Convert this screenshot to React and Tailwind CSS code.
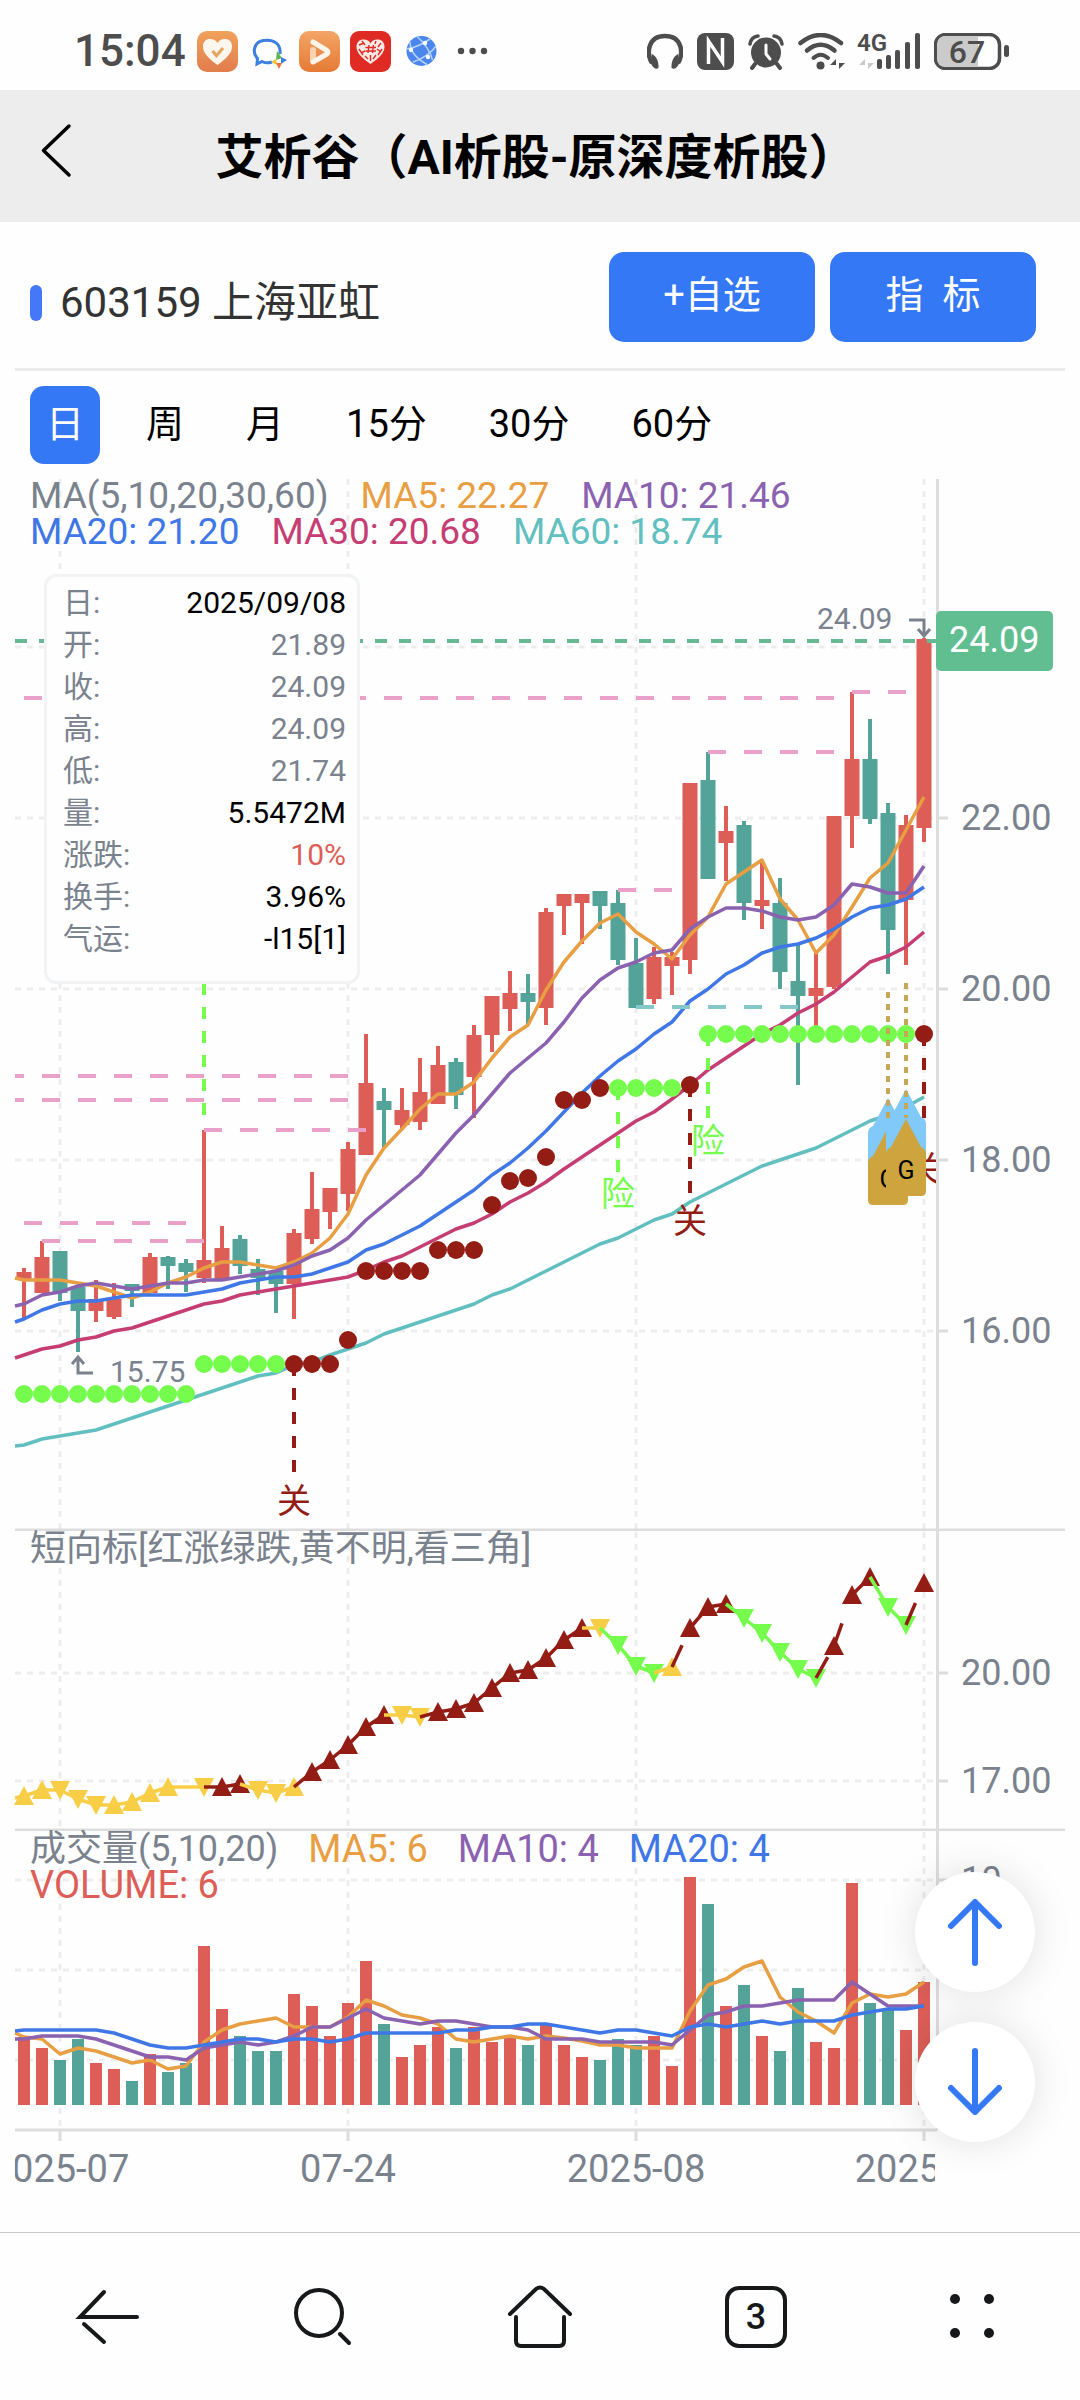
import React from 'react';

const RED = '#dc5e57';
const GREEN = '#54a399';
const LIME = '#75fc4c';
const DARK = '#931d14';
const YELLOW = '#f7ce46';
const GRAY = '#7a828e';

const FIRST_X = 24;
const STEP = 18;
const LEFT = 15;
const RIGHT = 937;
const TIME_X = [60, 348, 636, 924];

const xOf = (i) => FIRST_X + i * STEP;

// [color, high, body top, body bottom, low]
const CANDLES = [
  ['r', 1268, 1272, 1279, 1319], ['r', 1241, 1257, 1293, 1293], ['g', 1251, 1251, 1293, 1301],
  ['g', 1287, 1287, 1311, 1352], ['r', 1280, 1299, 1311, 1322], ['r', 1283, 1299, 1317, 1319],
  ['g', 1284, 1284, 1291, 1307], ['r', 1253, 1257, 1293, 1293], ['g', 1256, 1257, 1266, 1289],
  ['g', 1259, 1263, 1272, 1292], ['r', 1130, 1260, 1278, 1283], ['r', 1226, 1248, 1279, 1279],
  ['g', 1235, 1239, 1266, 1274], ['g', 1259, 1269, 1278, 1295], ['g', 1271, 1271, 1284, 1313],
  ['r', 1229, 1233, 1284, 1319], ['r', 1172, 1209, 1239, 1244], ['r', 1188, 1188, 1212, 1229],
  ['r', 1142, 1149, 1194, 1211], ['r', 1034, 1083, 1155, 1155], ['g', 1088, 1101, 1110, 1148],
  ['r', 1088, 1110, 1125, 1130], ['r', 1058, 1092, 1122, 1130], ['r', 1046, 1065, 1104, 1104],
  ['g', 1058, 1062, 1095, 1109], ['r', 1025, 1035, 1077, 1118], ['r', 996, 996, 1035, 1052],
  ['r', 971, 993, 1009, 1031], ['g', 974, 993, 1002, 1025], ['r', 908, 912, 1008, 1025],
  ['r', 894, 894, 906, 935], ['r', 894, 894, 903, 944], ['g', 891, 891, 906, 929],
  ['g', 890, 903, 960, 965], ['g', 938, 963, 1008, 1008], ['r', 947, 957, 999, 1004],
  ['r', 952, 957, 966, 995], ['r', 783, 783, 960, 974], ['g', 752, 780, 879, 879],
  ['r', 806, 831, 843, 881], ['g', 821, 825, 903, 920], ['r', 860, 900, 906, 929],
  ['g', 878, 903, 972, 989], ['g', 944, 981, 996, 1085], ['r', 953, 988, 996, 1026],
  ['r', 816, 816, 987, 989], ['r', 692, 759, 816, 848], ['g', 719, 759, 819, 824],
  ['g', 803, 813, 930, 974], ['r', 815, 825, 900, 965], ['r', 638, 639, 828, 842],
];

// first value sits on the left edge of the pane, the rest on the candles
const MA_LINES = [
  { color: '#e89e42', ys: [1278, 1280, 1280, 1280, 1283, 1286, 1292, 1298, 1292, 1283, 1277, 1268, 1262, 1262, 1265, 1268, 1262, 1253, 1238, 1214, 1175, 1148, 1129, 1109, 1094, 1094, 1082, 1058, 1037, 1025, 990, 962, 941, 923, 914, 932, 944, 959, 935, 917, 884, 872, 860, 899, 920, 953, 935, 907, 878, 863, 830, 797] },
  { color: '#8a62b0', ys: [1306, 1304, 1295, 1292, 1286, 1283, 1286, 1289, 1286, 1283, 1283, 1280, 1280, 1277, 1274, 1271, 1265, 1256, 1250, 1238, 1220, 1205, 1190, 1175, 1154, 1133, 1115, 1094, 1073, 1058, 1043, 1022, 998, 980, 968, 962, 953, 950, 929, 917, 908, 908, 911, 917, 920, 917, 905, 884, 887, 893, 893, 866] },
  { color: '#3f78e6', ys: [1322, 1319, 1310, 1304, 1301, 1301, 1298, 1295, 1295, 1295, 1295, 1292, 1289, 1283, 1280, 1277, 1277, 1274, 1268, 1262, 1250, 1244, 1235, 1226, 1214, 1202, 1190, 1175, 1163, 1148, 1131, 1112, 1093, 1076, 1061, 1049, 1034, 1022, 1001, 989, 974, 965, 953, 947, 944, 938, 929, 917, 908, 905, 899, 887] },
  { color: '#c53d72', ys: [1358, 1355, 1349, 1346, 1340, 1337, 1331, 1328, 1322, 1316, 1310, 1304, 1301, 1295, 1292, 1289, 1286, 1283, 1280, 1277, 1270, 1262, 1256, 1247, 1238, 1229, 1223, 1214, 1202, 1193, 1182, 1169, 1157, 1145, 1133, 1121, 1112, 1099, 1085, 1070, 1058, 1046, 1034, 1025, 1013, 1004, 992, 977, 962, 956, 947, 932] },
  { color: '#62bfbf', ys: [1446, 1445, 1439, 1436, 1433, 1430, 1424, 1418, 1412, 1406, 1400, 1394, 1388, 1382, 1376, 1373, 1365, 1362, 1355, 1349, 1343, 1334, 1328, 1322, 1316, 1310, 1304, 1295, 1289, 1280, 1271, 1262, 1253, 1244, 1238, 1229, 1220, 1214, 1202, 1193, 1184, 1175, 1166, 1160, 1154, 1148, 1139, 1130, 1121, 1115, 1107, 1097] },
];

// [from, to, y, color]
const DOT_RUNS = [
  [0, 9, 1394, LIME], [10, 14, 1364, LIME], [15, 17, 1364, DARK], [18, 18, 1340, DARK],
  [19, 22, 1271, DARK], [23, 25, 1250, DARK], [26, 26, 1205, DARK], [27, 27, 1181, DARK],
  [28, 28, 1178, DARK], [29, 29, 1157, DARK], [30, 31, 1100, DARK], [32, 32, 1088, DARK],
  [33, 36, 1088, LIME], [37, 37, 1085, DARK], [38, 49, 1034, LIME], [50, 50, 1034, DARK],
];

// [x1, x2, y]
const LEVELS = [
  [24, 834, 698], [852, 906, 692], [708, 834, 752], [618, 672, 890], [6, 348, 1076],
  [6, 348, 1100], [204, 366, 1130], [24, 186, 1223], [42, 204, 1241],
];

// [x, y1, y2, color, label, label baseline]
const SIGNALS = [
  [204, 983, 1115, LIME, '', 0],
  [294, 1364, 1472, DARK, '关', 1513],
  [618, 1088, 1172, LIME, '险', 1206],
  [690, 1085, 1193, DARK, '关', 1233],
  [708, 1034, 1118, LIME, '险', 1153],
  [924, 1034, 1118, DARK, '关', 1181],
];

// [marker, y]: u / d is the direction, - draws the line only
const TREND = [
  ['uy', 1796], ['uy', 1790], ['dy', 1790], ['dy', 1799], ['dy', 1805], ['uy', 1805], ['uy', 1802],
  ['uy', 1793], ['uy', 1787], ['-y', 1787], ['dy', 1787], ['ur', 1787], ['ur', 1784], ['dy', 1790],
  ['dy', 1793], ['uy', 1787], ['ur', 1772], ['ur', 1760], ['ur', 1745], ['ur', 1727], ['ur', 1715],
  ['dy', 1715], ['dy', 1717], ['ur', 1712], ['ur', 1709], ['ur', 1703], ['ur', 1688], ['ur', 1673],
  ['ur', 1670], ['ur', 1658], ['ur', 1640], ['ur', 1628], ['dy', 1628], ['dg', 1645], ['dg', 1666],
  ['dg', 1673], ['uy', 1667], ['ur', 1628], ['ur', 1607], ['ur', 1604], ['dg', 1618], ['dg', 1633],
  ['dg', 1652], ['dg', 1669], ['dg', 1678], ['ur', 1646], ['ur', 1595], ['ur', 1577], ['dg', 1607],
  ['dg', 1625], ['ur', 1583],
];
const TREND_COLORS = { y: YELLOW, r: DARK, g: LIME };

const VOLUME_TOPS = [
  2037, 2048, 2060, 2039, 2063, 2069, 2081, 2054, 2072, 2063, 1946, 2009, 2036, 2051, 2051, 1994, 2006,
  2036, 2003, 1961, 2024, 2057, 2045, 2027, 2048, 2027, 2042, 2037, 2045, 2025, 2045, 2057, 2060, 2039,
  2045, 2036, 2066, 1877, 1904, 2006, 1985, 2036, 2051, 1988, 2042, 2048, 1883, 2003, 2009, 2030, 1982,
];
const VOLUME_BASE = 2105;

const VOLUME_LINES = [
  { color: '#e89e42', ys: [2033, 2037, 2039, 2054, 2048, 2051, 2057, 2063, 2060, 2069, 2066, 2042, 2030, 2024, 2021, 2018, 2027, 2027, 2027, 2017, 2000, 2006, 2015, 2018, 2024, 2039, 2042, 2039, 2036, 2039, 2036, 2038, 2041, 2045, 2045, 2048, 2048, 2048, 2011, 1985, 1979, 1967, 1961, 1997, 2012, 2021, 2033, 2003, 1994, 1997, 1994, 1982] },
  { color: '#8a62b0', ys: [2039, 2039, 2036, 2036, 2036, 2039, 2045, 2051, 2057, 2057, 2060, 2048, 2045, 2042, 2045, 2042, 2036, 2027, 2027, 2018, 2009, 2018, 2021, 2024, 2021, 2021, 2024, 2027, 2027, 2030, 2039, 2039, 2039, 2042, 2042, 2042, 2042, 2045, 2030, 2015, 2012, 2006, 2006, 2003, 2000, 2000, 2000, 1982, 1994, 2006, 2006, 2006] },
  { color: '#3f78e6', ys: [2031, 2030, 2030, 2030, 2030, 2030, 2033, 2039, 2045, 2048, 2048, 2045, 2042, 2039, 2039, 2042, 2039, 2039, 2042, 2039, 2033, 2033, 2033, 2033, 2033, 2030, 2030, 2027, 2027, 2024, 2024, 2027, 2030, 2033, 2030, 2030, 2033, 2036, 2027, 2024, 2027, 2024, 2021, 2024, 2021, 2021, 2021, 2015, 2012, 2009, 2009, 2006] },
];

const PERIODS = ['日', '周', '月', '15分', '30分', '60分'];

const QUOTE = [
  ['日:', '2025/09/08', 'text-black'],
  ['开:', '21.89', 'text-[#7a828e]'],
  ['收:', '24.09', 'text-[#7a828e]'],
  ['高:', '24.09', 'text-[#7a828e]'],
  ['低:', '21.74', 'text-[#7a828e]'],
  ['量:', '5.5472M', 'text-black'],
  ['涨跌:', '10%', 'text-[#dc5e57]'],
  ['换手:', '3.96%', 'text-black'],
  ['气运:', '-l15[1]', 'text-black'],
];

function StatusBar() {
  return (
    <div className="flex h-[90px] items-center justify-between pt-[12px] pr-[71px] pl-[74px] text-[#4d4d4d]">
      <div className="flex items-center gap-[10px]">
        <span className="mr-[1px] text-[44px] leading-[44px] font-medium">15:04</span>
        <svg className="h-[41px] w-[41px]" viewBox="0 0 41 41">
          <defs>
            <linearGradient id="app-a" x1="0" y1="0" x2="0" y2="1">
              <stop offset="0" stopColor="#f0a25c" />
              <stop offset="1" stopColor="#e27c4c" />
            </linearGradient>
          </defs>
          <rect width="41" height="41" rx="10" fill="url(#app-a)" />
          <path d="M20.5 34C11 27 6 22 6 15.500C6 10.500 9 8 13 8C16.500 8 19 9.500 20.500 12C22 9.500 24.500 8 28 8C32 8 35 10.500 35 15.500C35 22 30 27 20.500 34Z" fill="#fdf6ec" />
          <path d="M15.500 20L19.500 24.500L26 17" fill="none" stroke="#e5a565" strokeWidth="3.2" />
        </svg>
        <svg className="h-[41px] w-[41px]" viewBox="0 0 41 41">
          <path d="M24 31C20 32.500 16 31.500 14 30.500L9 33L9.500 27.500C4 22 5.500 11 15.500 9.500C26 8 33 13 32 23" fill="none" stroke="#3b7fe0" strokeWidth="3" />
          <path d="M29 20L34 27L28 29Z" fill="#58b94a" />
          <path d="M33 26L39 29L33 33Z" fill="#3b7fe0" />
          <path d="M28 28L29 34L23 31Z" fill="#f2c233" />
          <path d="M28 32L34 32L31 38Z" fill="#e8743b" />
        </svg>
        <svg className="h-[41px] w-[41px]" viewBox="0 0 41 41">
          <defs>
            <linearGradient id="app-b" x1="0" y1="0" x2="0" y2="1">
              <stop offset="0" stopColor="#f3a567" />
              <stop offset="1" stopColor="#e57a35" />
            </linearGradient>
          </defs>
          <rect width="41" height="41" rx="10" fill="url(#app-b)" />
          <path d="M14 19V30" fill="none" stroke="#f9d3b0" strokeWidth="6" strokeLinecap="round" />
          <path d="M14 11L28 19.500Q30 21 28 23L14 31" fill="none" stroke="#fdf4ea" strokeWidth="5" strokeLinecap="round" strokeLinejoin="round" />
        </svg>
        <svg className="h-[41px] w-[41px]" viewBox="0 0 41 41">
          <rect width="41" height="41" rx="9" fill="#df2b24" />
          <path d="M20.500 33C12 27 6.500 22 6.500 16C6.500 11 9.500 8.500 13.500 8.500C17 8.500 19.500 10 20.500 12.500C21.500 10 24 8.500 27.500 8.500C31.500 8.500 34.500 11 34.500 16C34.500 22 29 27 20.500 33Z" fill="#fbe9e6" />
          <path d="M19 14L18 22M23.500 14L22.500 22M15.500 16.500H26M15.500 20H26M9 14L14 12M9 18L13 24M11 22L15 20M31 12L28 16M32 18L28 24M27 18L31 21M20.500 24V30M15 25L18 28M26 24L23 28M12 10L15 14M26 10L25 13" stroke="#df2b24" strokeWidth="1.4" />
        </svg>
        <svg className="h-[41px] w-[41px]" viewBox="0 0 41 41">
          <circle cx="20.500" cy="20" r="15" fill="#4a86ec" />
          <path d="M16 5.500C24 12 30 22 31.500 29M29 8C22 13 12 17 5.500 18M9 11C9 20 16 28 26 33.500M35 15C31 21 22 28 12 31" fill="none" stroke="#b7d2fa" strokeWidth="1.6" />
          <circle cx="24" cy="12" r="2.200" fill="#fff" />
          <circle cx="10" cy="19" r="2.200" fill="#fff" />
          <circle cx="27" cy="26" r="2.200" fill="#fff" />
        </svg>
        <svg className="h-[41px] w-[41px]" viewBox="0 0 41 41" fill="currentColor">
          <circle cx="9" cy="20" r="3.2" />
          <circle cx="20.500" cy="20" r="3.2" />
          <circle cx="32" cy="20" r="3.2" />
        </svg>
      </div>
      <div className="flex items-center gap-[14px]">
        <svg className="h-[37px] w-[36px]" viewBox="0 0 36 37" fill="none" stroke="currentColor">
          <path d="M5 30C-1 20 1 3 18 3C35 3 37 20 31 30" strokeWidth="4.5" />
          <path d="M5 21C9 23 12 28 11.500 35C8 37 5 34 3.500 29Z" fill="currentColor" stroke="none" />
          <path d="M31 21C27 23 24 28 24.500 35C28 37 31 34 32.500 29Z" fill="currentColor" stroke="none" />
        </svg>
        <svg className="h-[37px] w-[37px]" viewBox="0 0 37 37">
          <rect width="37" height="37" rx="8" fill="currentColor" />
          <path d="M11.500 31V8L25.500 29V5" fill="none" stroke="#fff" strokeWidth="3.5" />
        </svg>
        <svg className="h-[37px] w-[36px]" viewBox="0 0 36 37" fill="none" stroke="currentColor">
          <circle cx="18" cy="19.500" r="15" fill="currentColor" stroke="none" />
          <path d="M2 11Q3 4 10 3M34 11Q33 4 26 3" strokeWidth="3.5" strokeLinecap="round" />
          <path d="M7 31L4 35M29 31L32 35" strokeWidth="4" strokeLinecap="round" />
          <path d="M18 12V21L22 26" stroke="#fff" strokeWidth="3" strokeLinecap="round" />
        </svg>
        <svg className="h-[37px] w-[47px]" viewBox="0 0 47 37" fill="none" stroke="currentColor" strokeLinecap="round">
          <path d="M2.500 10Q22.500 -6 43 10" strokeWidth="4.5" />
          <path d="M9 17.500Q22.500 6 36.500 17.500" strokeWidth="4.5" />
          <path d="M15.500 25Q22.500 18.500 30 25" strokeWidth="4" />
          <circle cx="22.500" cy="32.500" r="4" fill="currentColor" stroke="none" />
          <path d="M38 36V26L32 32H38ZM41 26V36L47 30H41Z" fill="currentColor" stroke="none" />
        </svg>
        <svg className="h-[37px] w-[61px] overflow-visible" viewBox="0 0 61 37" fill="currentColor">
          <text x="-2" y="18" fontSize="24" fontWeight="600">4G</text>
          <path d="M6 36V26L0 32H6ZM9 26V36L15 30H9Z" fill="#c9c9c9" />
          <rect x="18" y="26" width="5" height="10" rx="2" />
          <rect x="27" y="22" width="5" height="14" rx="2" />
          <rect x="36" y="17" width="5" height="19" rx="2" />
          <rect x="46" y="9" width="5" height="27" rx="2" />
          <rect x="56" y="0" width="5" height="36" rx="2" />
        </svg>
        <svg className="h-[37px] w-[75px]" viewBox="0 0 75 37">
          <rect x="1.500" y="1.500" width="64" height="34" rx="10" fill="#fff" stroke="#4d4d4d" strokeWidth="3.5" />
          <path d="M44 3V34H12Q3 34 3 25V12Q3 3 12 3Z" fill="#cbcbcb" />
          <rect x="70" y="12" width="5" height="12" rx="2.5" fill="#4d4d4d" />
          <text x="33" y="30" textAnchor="middle" fontSize="32" fontWeight="500" fill="#4d4d4d">67</text>
        </svg>
      </div>
    </div>
  );
}

function TitleBar() {
  return (
    <header className="grid h-[132px] grid-cols-[96px_1fr_104px] items-center bg-[#ededed]">
      <button type="button" aria-label="返回" className="flex h-full items-center justify-start pb-[12px] pl-[40px]">
        <svg className="h-[60px] w-[34px]" viewBox="0 0 34 60" fill="none" stroke="#000" strokeWidth="3.5" strokeLinecap="round" strokeLinejoin="round">
          <path d="M29 6L3.500 30.500L29 55" />
        </svg>
      </button>
      <h1 className="pt-[4px] text-center text-[48px] leading-[60px] font-bold whitespace-nowrap text-black">艾析谷（AI析股-原深度析股）</h1>
    </header>
  );
}

function StockRow() {
  return (
    <div className="mx-[15px] flex h-[149px] items-start justify-between border-b-3 border-[#ebebeb] pt-[30px] pr-[29px] pl-[15px]">
      <div className="flex h-[102px] items-center gap-[18px]">
        <span className="h-[36px] w-[12px] rounded-full bg-[#4478f8]"></span>
        <h2 className="text-[42px] leading-[60px] text-[#333]">603159 上海亚虹</h2>
      </div>
      <div className="flex gap-[15px]">
        <button type="button" className="h-[90px] w-[206px] rounded-[15px] bg-[#3578f6] pb-[4px] text-[38px] text-white">+自选</button>
        <button type="button" className="h-[90px] w-[206px] rounded-[15px] bg-[#3578f6] pb-[4px] text-[38px] whitespace-pre text-white">指&nbsp;&nbsp;标</button>
      </div>
    </div>
  );
}

function PeriodTabs() {
  return (
    <div className="flex gap-[30px] px-[30px] pt-[15px]">
      {PERIODS.map((name, i) => (
        <button
          key={name}
          type="button"
          className={`h-[78px] rounded-[14px] px-[16px] pb-[2px] text-[38px] ${i === 0 ? 'bg-[#3578f6] text-white' : 'text-black'}`}
        >
          {name}
        </button>
      ))}
    </div>
  );
}

function Grid({ top, bottom, rows }) {
  return (
    <g stroke="#ededed" strokeWidth="3" strokeDasharray="6 6">
      {rows.map((y) => (
        <line key={y} x1={LEFT} x2={RIGHT} y1={y} y2={y} />
      ))}
      {TIME_X.map((x) => (
        <line key={x} x1={x} x2={x} y1={top} y2={bottom} />
      ))}
    </g>
  );
}

function PriceAxis({ top, bottom, ticks }) {
  return (
    <g>
      <line x1="937.500" x2="937.500" y1={top} y2={bottom} stroke="#dddddd" strokeWidth="3" />
      {ticks.map(([y, label]) => (
        <g key={y}>
          <line x1="939" x2="948" y1={y} y2={y} stroke="#dddddd" strokeWidth="3" />
          <text x="961" y={y + 12} fontSize="36" fill={GRAY}>{label}</text>
        </g>
      ))}
    </g>
  );
}

function Lines({ lines }) {
  return lines.map(({ color, ys }) => (
    <polyline
      key={color}
      points={ys.map((y, i) => `${i === 0 ? LEFT : xOf(i - 1)},${y}`).join(' ')}
      fill="none"
      stroke={color}
      strokeWidth="3.5"
      strokeLinejoin="round"
    />
  ));
}

function Flag({ x, y }) {
  const shape = (top) =>
    `M${x} ${top}L${x + 15} ${top + 28}Q${x + 20} ${top + 30} ${x + 20} ${top + 35}V${top + 72}Q${x + 20} ${top + 77} ${x + 15} ${top + 77}H${x - 15}Q${x - 20} ${top + 77} ${x - 20} ${top + 72}V${top + 35}Q${x - 20} ${top + 30} ${x - 15} ${top + 28}Z`;
  return (
    <g>
      <path d={shape(y)} fill="#80c9f9" />
      <path d={shape(y + 30)} fill="#cea43f" />
      <text x={x} y={y + 90} textAnchor="middle" fontSize="25" fill="#000">G</text>
    </g>
  );
}

function MainPane() {
  return (
    <section className="relative mt-[12px]">
      <svg className="block w-full" viewBox="0 476 1080 1055">
        <Grid top={479} bottom={1530} rows={[647, 818, 989, 1160, 1331]} />
        <PriceAxis
          top={479}
          bottom={1530}
          ticks={[[818, '22.00'], [989, '20.00'], [1160, '18.00'], [1331, '16.00']]}
        />
        {CANDLES.map(([c, high, top, bottom, low], i) => (
          <g key={i} fill={c === 'r' ? RED : GREEN}>
            <rect x={xOf(i) - 2} y={high} width="4" height={low - high} />
            <rect x={xOf(i) - 7.5} y={top} width="15" height={bottom - top} />
          </g>
        ))}
        <Lines lines={MA_LINES} />
        <g strokeWidth="4" strokeDasharray="18 18">
          {LEVELS.map(([x1, x2, y]) => (
            <line
              key={`${x1}-${y}`}
              x1={Math.max(x1, LEFT)}
              x2={x2}
              y1={y}
              y2={y}
              strokeDashoffset={Math.max(x1, LEFT) - x1}
              stroke="#eba0c9"
            />
          ))}
          <line x1="636" x2="798" y1="1007" y2="1007" stroke="#84c8ca" />
        </g>
        {DOT_RUNS.map(([from, to, y, color]) =>
          Array(to - from + 1)
            .fill(null)
            .map((_, k) => <circle key={`${from}-${k}`} cx={xOf(from + k)} cy={y} r="9" fill={color} />)
        )}
        <clipPath id="pane">
          <rect x={LEFT} y="479" width={RIGHT - LEFT - 1} height="1051" />
        </clipPath>
        <g clipPath="url(#pane)">
          {SIGNALS.map(([x, y1, y2, color, label, baseline]) => (
            <g key={x}>
              <line x1={x} x2={x} y1={y1} y2={y2} stroke={color} strokeWidth="4" strokeDasharray="12 12" />
              {label && (
                <text x={x} y={baseline} textAnchor="middle" fontSize="34" fill={color}>{label}</text>
              )}
            </g>
          ))}
        </g>
        <Flag x={888} y={1098} />
        <Flag x={906} y={1089} />
        <g stroke="#c5a75a" strokeWidth="4" strokeDasharray="6 6">
          <line x1="888" x2="888" y1="992" y2="1118" />
          <line x1="906" x2="906" y1="983" y2="1118" />
        </g>
        <line x1={LEFT} x2={RIGHT} y1="641" y2="641" stroke="#67b994" strokeWidth="4" strokeDasharray="12 12" />
        <rect x="936" y="611" width="117" height="60" rx="5" fill="#61be91" />
        <text x="949" y="652" fontSize="36" fill="#fff">24.09</text>
        <g fontSize="30" fill={GRAY}>
          <text x="817" y="629">24.09</text>
          <text x="110" y="1382">15.75</text>
        </g>
        <g fill="none" stroke={GRAY} strokeWidth="3">
          <path d="M909 620H924V635M918 629L924 636L930 629" />
          <path d="M93 1373H78V1358M72 1364L78 1357L84 1364" />
        </g>
        <line x1={LEFT} x2="1065" y1="1530" y2="1530" stroke="#dddddd" strokeWidth="3" />
      </svg>
      <div className="absolute top-[2px] right-[143px] left-[30px] flex flex-wrap gap-x-[32px] text-[37px] leading-[36px]">
        <span className="text-[#7a828e]">MA(5,10,20,30,60)</span>
        <span className="text-[#e89e42]">MA5: 22.27</span>
        <span className="text-[#8a62b0]">MA10: 21.46</span>
        <span className="text-[#3f78e6]">MA20: 21.20</span>
        <span className="text-[#c53d72]">MA30: 20.68</span>
        <span className="text-[#62bfbf]">MA60: 18.74</span>
      </div>
      <dl className="absolute top-[98px] left-[44px] w-[316px] rounded-[12px] border-3 border-[#f2f3f5] bg-[#fefefe] pt-[5px] pr-[11px] pb-[21px] pl-[16px] text-[30px] leading-[42px]">
        {QUOTE.map(([label, value, color]) => (
          <div key={label} className="flex justify-between">
            <dt className="text-[#7a828e]">{label}</dt>
            <dd className={color}>{value}</dd>
          </div>
        ))}
      </dl>
    </section>
  );
}

function TrendPane() {
  return (
    <section className="relative">
      <svg className="block w-full" viewBox="0 1531 1080 300">
        <Grid top={1532} bottom={1830} rows={[1673, 1781]} />
        <PriceAxis top={1531} bottom={1830} ticks={[[1673, '20.00'], [1781, '17.00']]} />
        {TREND.map(([mark, y], i) => {
          const x = xOf(i);
          const color = TREND_COLORS[mark[1]];
          const x1 = i === 0 ? LEFT : xOf(i - 1);
          const y1 = i === 0 ? 1798 : TREND[i - 1][1];
          return (
            <g key={i} fill={color}>
              <line x1={x1} y1={y1} x2={x} y2={y} stroke={color} strokeWidth="3.5" strokeDasharray={mark[1] === 'r' ? '24 24' : undefined} />
              {mark[0] === 'u' && <path d={`M${x} ${y - 10}L${x + 10} ${y + 9}H${x - 10}Z`} />}
              {mark[0] === 'd' && <path d={`M${x} ${y + 10}L${x + 10} ${y - 9}H${x - 10}Z`} />}
            </g>
          );
        })}
        <line x1={LEFT} x2="1065" y1="1830" y2="1830" stroke="#dddddd" strokeWidth="3" />
      </svg>
      <p className="absolute top-0 left-[30px] text-[36px] leading-[36px] text-[#7a828e]">短向标[红涨绿跌,黄不明,看三角]</p>
    </section>
  );
}

function VolumePane() {
  return (
    <section className="relative">
      <svg className="block w-full" viewBox="0 1831 1080 401">
        <Grid top={1832} bottom={2129} rows={[1880, 1970, 2060]} />
        <PriceAxis top={1831} bottom={2130} ticks={[[1880, '10'], [1970, '6'], [2060, '2']]} />
        {VOLUME_TOPS.map((y, i) => (
          <rect key={i} x={xOf(i) - 6} y={y} width="12" height={VOLUME_BASE - y} fill={CANDLES[i][0] === 'r' ? RED : GREEN} />
        ))}
        <Lines lines={VOLUME_LINES} />
        <line x1={LEFT} x2={RIGHT} y1="2130" y2="2130" stroke="#dddddd" strokeWidth="3" />
        <clipPath id="axis">
          <rect x={LEFT} y="2130" width={RIGHT - LEFT - 2} height="80" />
        </clipPath>
        <g clipPath="url(#axis)">
          {['2025-07', '07-24', '2025-08', '2025-09'].map((label, i) => (
            <g key={label}>
              <line x1={TIME_X[i]} x2={TIME_X[i]} y1="2131" y2="2141" stroke="#dddddd" strokeWidth="3" />
              <text x={TIME_X[i]} y="2182" textAnchor="middle" fontSize="38" fill={GRAY}>{label}</text>
            </g>
          ))}
        </g>
      </svg>
      <div className="absolute top-0 right-[143px] left-[30px] flex flex-wrap gap-x-[30px] text-[38px] leading-[36px]">
        <span className="text-[36px] text-[#7a828e]">成交量(5,10,20)</span>
        <span className="text-[#e89e42]">MA5: 6</span>
        <span className="text-[#8a62b0]">MA10: 4</span>
        <span className="text-[#3f78e6]">MA20: 4</span>
        <span className="text-[#dc5e57]">VOLUME: 6</span>
      </div>
      <div className="absolute top-[41px] right-[45px] flex flex-col gap-[30px]">
        <button type="button" aria-label="上一只" className="flex h-[120px] w-[120px] items-center justify-center rounded-full bg-white shadow-[0_0_40px_rgba(0,0,0,0.12)]">
          <svg className="h-[72px] w-[60px]" viewBox="0 0 60 72" fill="none" stroke="#3578f6" strokeWidth="6" strokeLinecap="round" strokeLinejoin="round">
            <path d="M30 67V6M6 30L30 6L54 30" />
          </svg>
        </button>
        <button type="button" aria-label="下一只" className="flex h-[120px] w-[120px] items-center justify-center rounded-full bg-white shadow-[0_0_40px_rgba(0,0,0,0.12)]">
          <svg className="h-[72px] w-[60px]" viewBox="0 0 60 72" fill="none" stroke="#3578f6" strokeWidth="6" strokeLinecap="round" strokeLinejoin="round">
            <path d="M30 5V66M6 42L30 66L54 42" />
          </svg>
        </button>
      </div>
    </section>
  );
}

function BrowserNav() {
  const icon = 'h-[72px] w-[72px]';
  return (
    <nav className="grid h-[168px] grid-cols-5 items-center justify-items-center border-t border-[#c9c9c9] text-[#17181a]">
      <button type="button" aria-label="后退">
        <svg className={icon} viewBox="0 0 72 72" fill="none" stroke="currentColor" strokeWidth="4" strokeLinecap="round">
          <path d="M65 36H8L32 11M12 43L32 61" />
        </svg>
      </button>
      <button type="button" aria-label="搜索">
        <svg className={icon} viewBox="0 0 72 72" fill="none" stroke="currentColor" strokeWidth="4" strokeLinecap="round">
          <circle cx="31" cy="32" r="23" />
          <path d="M52 53L61 62" />
        </svg>
      </button>
      <button type="button" aria-label="主页">
        <svg className={icon} viewBox="0 0 72 72" fill="none" stroke="currentColor" strokeWidth="4" strokeLinecap="round">
          <path d="M6 33L32 8Q36 5 40 8L66 33" />
          <path d="M12 36V60Q12 65 17 65H55Q60 65 60 60V36" />
        </svg>
      </button>
      <button type="button" className="flex h-[62px] w-[62px] items-center justify-center rounded-[14px] border-4 border-current text-[36px] leading-[36px] font-medium">3</button>
      <button type="button" aria-label="菜单">
        <svg className={icon} viewBox="0 0 72 72" fill="currentColor">
          <circle cx="19" cy="18" r="5" />
          <circle cx="53" cy="18" r="5" />
          <circle cx="19" cy="52" r="5" />
          <circle cx="53" cy="52" r="5" />
        </svg>
      </button>
    </nav>
  );
}

function App() {
  return (
    <div className="min-h-screen bg-[#fefefe] font-[Roboto,'Noto_Sans_CJK_SC',sans-serif]">
      <StatusBar />
      <TitleBar />
      <main>
        <StockRow />
        <PeriodTabs />
        <MainPane />
        <TrendPane />
        <VolumePane />
      </main>
      <BrowserNav />
    </div>
  );
}

export default App;
